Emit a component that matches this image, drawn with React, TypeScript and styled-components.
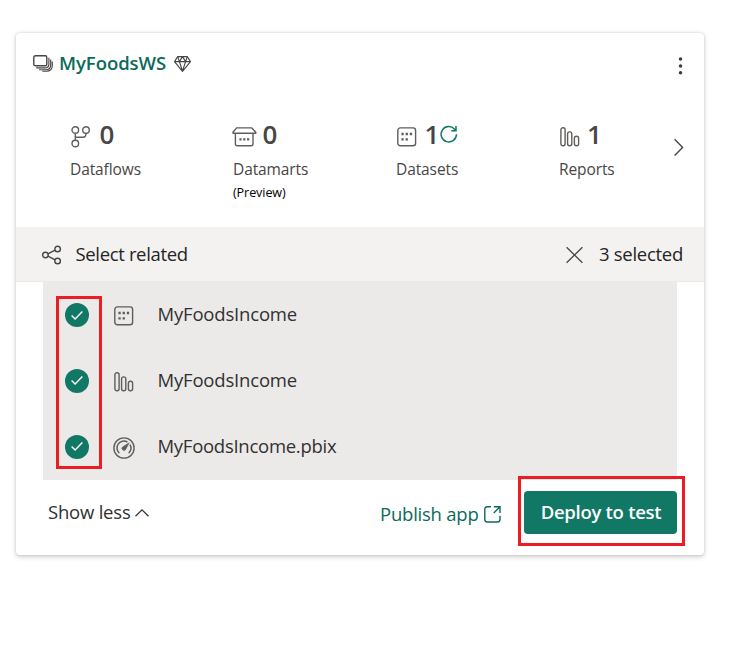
import React from 'react';
import styled, { createGlobalStyle } from 'styled-components';

const GlobalStyle = createGlobalStyle`
  * { box-sizing: border-box; }
  body { margin: 0; background: #fff; font-family: "Open Sans", "Noto Sans", sans-serif; color: #323130; }
  svg { display: block; flex: none; overflow: visible; }
`;

const Page = styled.main`
  height: 646px;
  padding: 33px 40px 0 16px;
  overflow: hidden;
`;

const Card = styled.section`
  width: 688px;
  height: 522px;
  border-radius: 4px;
  background: #fff;
  box-shadow: 0 1.6px 5px rgba(0, 0, 0, 0.2), 0 0 2px rgba(0, 0, 0, 0.12);
`;

const Header = styled.header`
  display: flex;
  align-items: center;
  height: 61px;
  padding: 0 20px 0 17px;
`;

const WorkspaceName = styled.h1`
  margin: 0 7px 0 6px;
  padding-bottom: 2px;
  width: 108px;
  font-size: 18.5px;
  font-weight: 600;
  line-height: 26px;
  letter-spacing: -0.05px;
  white-space: nowrap;
  color: #0c6a5b;
`;

const IconButton = styled.button`
  display: flex;
  padding: 0;
  border: 0;
  background: none;
  color: inherit;
`;

const MoreButton = styled(IconButton)`
  margin-left: auto;
  padding-top: 4px;
`;

const Stats = styled.div`
  display: grid;
  grid-template-columns: 163px 163px 163px 114px 10px;
  height: 133px;
  padding: 24px 0 0 55px;
`;

const StatTop = styled.div`
  display: flex;
  align-items: center;
  height: 32px;
`;

const StatIcon = styled.span<{ $slot: number; $pull: number }>`
  width: ${(p) => p.$slot}px;
  margin-left: ${(p) => -p.$pull}px;
  padding-top: 5px;
`;

const StatValue = styled.span`
  margin-right: 1px;
  font-size: 26px;
  font-weight: 600;
  line-height: 32px;
  color: #484644;
`;

const StatLabel = styled.div`
  margin: 7px 0 0 -1px;
  font-size: 15.5px;
  line-height: 25px;
  letter-spacing: -0.1px;
  color: #484644;
`;

const StatNote = styled.div`
  margin: 1px 0 0 -1px;
  font-size: 12.6px;
  line-height: 20px;
  letter-spacing: -0.1px;
  color: #000;
`;

const NextButton = styled(IconButton)`
  align-self: start;
  margin-top: 20px;
`;

const SelectionBar = styled.div`
  display: flex;
  align-items: center;
  height: 55px;
  padding: 0 21px 0 26px;
  border-bottom: 1px solid #eaeaea;
  background: #f3f2f1;
`;

const RelatedSlot = styled.span`
  padding-top: 1px;
`;

const BarText = styled.span<{ $gap: number; $spacing: number }>`
  margin-left: ${(p) => p.$gap}px;
  font-size: 18.5px;
  line-height: 26px;
  letter-spacing: ${(p) => p.$spacing}px;
  white-space: nowrap;
  color: #252423;
`;

const SelectionCount = styled.div`
  display: flex;
  align-items: center;
  margin-left: auto;
`;

const ItemList = styled.ul`
  position: relative;
  margin: -1px 27px 0;
  padding: 1px 0 0;
  height: 199px;
  list-style: none;
  background: #ebeae8;
`;

const Item = styled.li`
  display: grid;
  grid-template-columns: 24px 22px 1fr;
  column-gap: 23.5px;
  align-items: center;
  height: 66px;
  padding-left: 22px;
`;

const ItemIcon = styled.span`
  display: flex;
  justify-content: center;
  padding-top: 1px;
`;

const ItemName = styled.span<{ $spacing: number }>`
  margin-left: -0.5px;
  padding-bottom: 3px;
  font-size: 18.5px;
  line-height: 26px;
  letter-spacing: ${(p) => p.$spacing}px;
`;

const CheckCircle = styled.span`
  display: flex;
  align-items: center;
  justify-content: center;
  width: 24px;
  height: 24px;
  border-radius: 50%;
  background: #117865;

  li:nth-child(n + 2) > & {
    margin-bottom: 1px;
  }
`;

const Callout = styled.div<{ $top: number; $left: number; $width: number; $height: number }>`
  position: absolute;
  top: ${(p) => p.$top}px;
  left: ${(p) => p.$left}px;
  width: ${(p) => p.$width}px;
  height: ${(p) => p.$height}px;
  border: 3px solid #ed1c24;
  pointer-events: none;
`;

const Footer = styled.footer`
  display: flex;
  align-items: center;
  height: 65px;
  padding: 0 27px 0 32px;
`;

const ShowLess = styled(IconButton)`
  align-items: center;
  gap: 5px;
  padding-bottom: 1px;
  font: 400 18.5px/26px "Open Sans", "Noto Sans", sans-serif;
  letter-spacing: -0.22px;

  svg {
    margin-top: 2px;
  }
`;

const PublishLink = styled.a`
  display: flex;
  align-items: center;
  gap: 5px;
  margin: 3px 23.5px 0 auto;
  font-size: 18.5px;
  line-height: 26px;
  letter-spacing: -0.24px;
  color: #0c6a5b;
`;

const DeployWrap = styled.div`
  position: relative;
`;

const DeployButton = styled.button`
  display: block;
  width: 153px;
  height: 43px;
  padding: 0 0 2px 1px;
  border: 0;
  border-radius: 4px;
  background: #117865;
  color: #fff;
  font: 600 18.5px/26px "Open Sans", "Noto Sans", sans-serif;
  letter-spacing: -0.28px;
  white-space: nowrap;
`;

const line = { fill: 'none', stroke: '#605e5c', strokeWidth: 1.4 };

const WorkspaceIcon = () => (
  <svg width="20" height="17" viewBox="0 0 20 17" fill="none" stroke="#484644" strokeWidth="1.4">
    <rect x=".8" y=".8" width="13" height="10" rx="1.6" />
    <path d="M15.9 2.8v6.1q0 4-4 4H3.2M17.7 4.6v5.1q0 5-5 5H6M19.3 6.6v3.6q0 6-6 6H9.3" strokeWidth="1.15" />
  </svg>
);

const DiamondIcon = () => (
  <svg width="17" height="16" viewBox="0 0 17 16" fill="none" stroke="#484644" strokeWidth="1.1" strokeLinejoin="round">
    <path d="M3.7.6h9.6l3.2 5-8 9.8-8-9.8zM.5 5.6h16M3.7.6l1.7 5L8.5 15l3.1-9.4 1.7-5M5.4 5.6 8.5.6l3.1 5" />
  </svg>
);

const DataflowIcon = () => (
  <svg width="20" height="22" viewBox="0 0 20 22" {...line}>
    <circle cx="4.3" cy="4" r="3.3" />
    <circle cx="15" cy="4" r="3.3" />
    <circle cx="4.3" cy="17.5" r="3.3" />
    <path d="M4.3 7.3v6.9M4.3 11.3h7.9q2.8 0 2.8-4" />
  </svg>
);

const DatamartIcon = () => (
  <svg width="25" height="20" viewBox="0 0 25 20" {...line}>
    <path d="M4.6.9h15.2l4 4.3v1H1v-1zM3.4 6.2v10.6q0 2 2 2h13.6q2 0 2-2V6.2" strokeLinejoin="round" />
    <path d="M7.4 12.3h2.2M11.2 12.3h2.2M15 12.3h2.2" strokeWidth="2.2" />
  </svg>
);

const DatasetIcon = () => (
  <svg width="20" height="20" viewBox="0 0 20 20" {...line}>
    <rect x=".8" y=".9" width="17.8" height="17.8" rx="2.5" />
    <path d="M4.4 7h2.3M8.6 7h2.3M12.8 7h2.3M4.4 12.3h2.3M8.6 12.3h2.3" strokeWidth="2.3" />
  </svg>
);

const ReportIcon = () => (
  <svg width="20" height="20" viewBox="0 0 20 20" {...line}>
    <rect x=".9" y=".8" width="4.2" height="18" rx="2" />
    <rect x="7.6" y="4.9" width="4.2" height="13.9" rx="2" />
    <rect x="14.4" y="9.3" width="4.2" height="9.5" rx="2" />
  </svg>
);

const GaugeIcon = () => (
  <svg width="22" height="22" viewBox="0 0 22 22" {...line}>
    <circle cx="11" cy="11" r="10.1" />
    <path d="M6.3 16.1A6.9 6.9 0 0 1 14.4 5M17 7.7a6.9 6.9 0 0 1-1.3 8.4" strokeWidth="1.5" />
    <path d="M16.2 5.8 12.7 12.4a2 2 0 1 1-2.8-2.7z" fill="#605e5c" strokeWidth=".6" />
  </svg>
);

const RefreshIcon = () => (
  <svg width="18" height="18" viewBox="0 0 18 18" fill="none" stroke="#117865" strokeWidth="1.5">
    <path d="M16.5 9.3A7.7 7.7 0 1 1 14.6 4.2l1.2 1.4M16 1v4.8h-4.7" />
  </svg>
);

const NextIcon = () => (
  <svg width="10" height="18" viewBox="0 0 10 18" fill="none" stroke="#484644" strokeWidth="1.4">
    <path d="m.6 1.3 8 8.1-8 8.1" />
  </svg>
);

const MoreIcon = () => (
  <svg width="7" height="18" viewBox="0 0 7 18" fill="#3b3a39">
    <circle cx="3.5" cy="2" r="1.75" />
    <circle cx="3.5" cy="8.9" r="1.75" />
    <circle cx="3.5" cy="15.8" r="1.75" />
  </svg>
);

const RelatedIcon = () => (
  <svg width="20" height="18" viewBox="0 0 20 18" fill="none" stroke="#484644" strokeWidth="1.4">
    <circle cx="3.4" cy="9" r="2.8" />
    <circle cx="15.6" cy="3" r="2.8" />
    <circle cx="15.6" cy="15" r="2.8" />
    <path d="m5.9 7.8 7.2-3.6M5.9 10.2l7.2 3.6" />
  </svg>
);

const CloseIcon = () => (
  <svg width="17" height="17" viewBox="0 0 17 17" fill="none" stroke="#484644" strokeWidth="1.3">
    <path d="m.6 1.2 15.8 15.6M16.4 1.2.6 16.8" />
  </svg>
);

const CheckIcon = () => (
  <svg width="12" height="9" viewBox="0 0 12 9" fill="none" stroke="#fff" strokeWidth="1.4">
    <path d="m.6 4.5 3.5 3.4L11.4.6" />
  </svg>
);

const ChevronUpIcon = () => (
  <svg width="14" height="8" viewBox="0 0 14 8" fill="none" stroke="#323130" strokeWidth="1.3">
    <path d="M.5 7.2 7 .9l6.5 6.3" />
  </svg>
);

const ExternalIcon = () => (
  <svg width="17" height="17" viewBox="0 0 17 17" fill="none" stroke="#0c6a5b" strokeWidth="1.4">
    <path d="M7 .8H3.2Q.8.8.8 3.2v10.4Q.8 16 3.2 16h10.4q2.4 0 2.4-2.4V9.8M9.8.8H16v6.1M16 .8 9.7 7.1" />
  </svg>
);

const stats = [
  { label: 'Dataflows', value: 0, icon: <DataflowIcon />, slot: 28.5, pull: 0 },
  { label: 'Datamarts', value: 0, icon: <DatamartIcon />, slot: 31, pull: 2.5, note: '(Preview)' },
  { label: 'Datasets', value: 1, icon: <DatasetIcon />, slot: 27.5, pull: 0, refresh: true },
  { label: 'Reports', value: 1, icon: <ReportIcon />, slot: 27, pull: 0 },
];

const items = [
  { name: 'MyFoodsIncome', icon: <DatasetIcon />, spacing: -0.18 },
  { name: 'MyFoodsIncome', icon: <ReportIcon />, spacing: -0.18 },
  { name: 'MyFoodsIncome.pbix', icon: <GaugeIcon />, spacing: -0.27 },
];

export default function App() {
  return (
    <Page>
      <GlobalStyle />
      <Card>
        <Header>
          <WorkspaceIcon />
          <WorkspaceName>MyFoodsWS</WorkspaceName>
          <DiamondIcon />
          <MoreButton aria-label="More options"><MoreIcon /></MoreButton>
        </Header>
        <Stats>
          {stats.map((s) => (
            <div key={s.label}>
              <StatTop>
                <StatIcon $slot={s.slot} $pull={s.pull}>{s.icon}</StatIcon>
                <StatValue>{s.value}</StatValue>
                {s.refresh && <RefreshIcon />}
              </StatTop>
              <StatLabel>{s.label}</StatLabel>
              {s.note && <StatNote>{s.note}</StatNote>}
            </div>
          ))}
          <NextButton aria-label="Next"><NextIcon /></NextButton>
        </Stats>
        <SelectionBar>
          <RelatedSlot><RelatedIcon /></RelatedSlot>
          <BarText $gap={13.5} $spacing={-0.35}>Select related</BarText>
          <SelectionCount>
            <CloseIcon />
            <BarText $gap={16} $spacing={-0.28}>3 selected</BarText>
          </SelectionCount>
        </SelectionBar>
        <ItemList>
          {items.map((item, i) => (
            <Item key={i}>
              <CheckCircle><CheckIcon /></CheckCircle>
              <ItemIcon>{item.icon}</ItemIcon>
              <ItemName $spacing={item.spacing}>{item.name}</ItemName>
            </Item>
          ))}
          <Callout $top={15} $left={13} $width={46} $height={173} />
        </ItemList>
        <Footer>
          <ShowLess>Show less <ChevronUpIcon /></ShowLess>
          <PublishLink>Publish app <ExternalIcon /></PublishLink>
          <DeployWrap>
            <DeployButton>Deploy to test</DeployButton>
            <Callout $top={-15} $left={-6} $width={167} $height={70} />
          </DeployWrap>
        </Footer>
      </Card>
    </Page>
  );
}
